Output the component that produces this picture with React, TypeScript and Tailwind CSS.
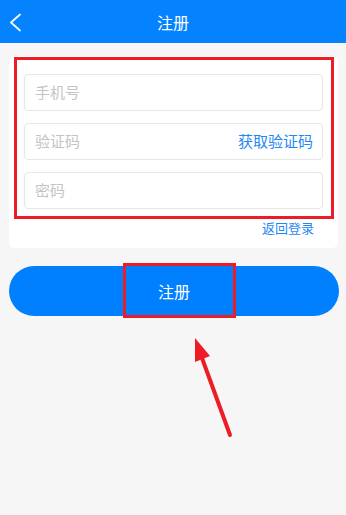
import React from "react";

const font = { fontFamily: '"Noto Sans CJK SC", "Noto Sans", sans-serif' };

export default function App() {
  return (
    <div className="relative w-[346px] h-[515px] bg-[#f6f6f6] overflow-hidden" style={font}>
      <div className="relative h-[43px] bg-[#0582fd] flex items-center justify-center">
        <svg className="absolute left-[9px] top-[13px]" width="13" height="19" viewBox="0 0 13 19">
          <path d="M11 1.5 L2 9.5 L11 17.5" fill="none" stroke="#fff" strokeWidth="1.7" strokeLinecap="round" strokeLinejoin="round" />
        </svg>
        <span className="text-white text-[16px] leading-none">注册</span>
      </div>

      <div className="relative mx-[9px] mt-[13px] w-[329px] bg-white rounded-[6px] px-[15px] pt-[18px] pb-[10px]">
        <div className="flex flex-col gap-[12px]">
          <div className="h-[37px] border border-[#e6e6e6] rounded-[4px] flex items-center px-[10px]">
            <span className="text-[15px] text-[#c4c4c8]">手机号</span>
          </div>
          <div className="h-[37px] border border-[#e6e6e6] rounded-[4px] flex items-center justify-between pl-[10px] pr-[9px]">
            <span className="text-[15px] text-[#c4c4c8]">验证码</span>
            <span className="text-[15px] text-[#1e88f5]">获取验证码</span>
          </div>
          <div className="h-[37px] border border-[#e6e6e6] rounded-[4px] flex items-center px-[10px]">
            <span className="text-[15px] text-[#c4c4c8]">密码</span>
          </div>
        </div>
        <div className="flex justify-end mt-[9px] pr-[9px]">
          <span className="text-[13px] leading-[20px] text-[#1e88f5]">返回登录</span>
        </div>
        <div className="absolute left-[5px] top-[1px] w-[320px] h-[162px] border-[3px] border-[#ee1c25] pointer-events-none" />
      </div>

      <div className="relative mx-[9px] mt-[18px] w-[330px] h-[50px] rounded-full bg-[#0080fe] flex items-center justify-center">
        <span className="text-white text-[16px] leading-none">注册</span>
        <div className="absolute left-[114px] top-[-3px] w-[113px] h-[55px] border-[3px] border-[#ee1c25]" />
      </div>

      <svg className="absolute left-0 top-0 pointer-events-none" width="346" height="515" viewBox="0 0 346 515">
        <line x1="202" y1="358" x2="230" y2="435" stroke="#ee1c25" strokeWidth="4" strokeLinecap="round" />
        <polygon points="195,338 195,362 210,356" fill="#ee1c25" />
      </svg>
    </div>
  );
}
